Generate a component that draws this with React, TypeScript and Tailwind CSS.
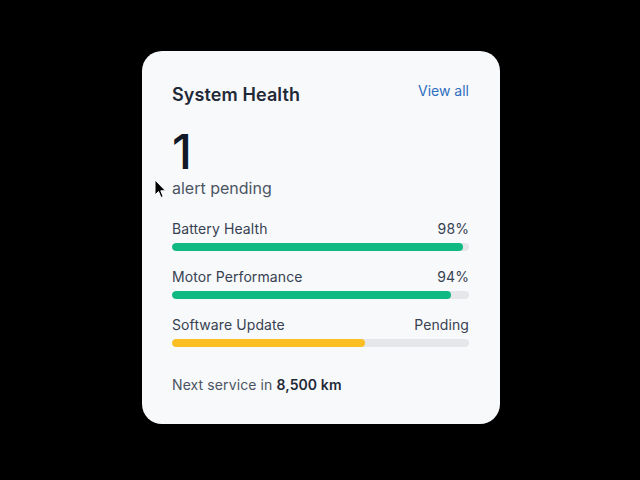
import React from "react";

const rows = [
  { label: "Battery Health", value: "98%", pct: 98, color: "bg-[#10b981]" },
  { label: "Motor Performance", value: "94%", pct: 94, color: "bg-[#10b981]" },
  { label: "Software Update", value: "Pending", pct: 65, color: "bg-[#fbbf24]" },
];

export default function App() {
  return (
    <div
      className="relative w-[640px] h-[480px] bg-black flex items-start justify-center pt-[51px] pl-[2px]"
      style={{ fontFamily: "Inter, 'Noto Sans', sans-serif" }}
    >
      <div className="w-[358px] h-[373px] rounded-[20px] bg-[#f8f9fb] pl-[30px] pr-[31px] pt-[30px] flex flex-col">
        <div className="flex items-start justify-between">
          <div className="text-[18px] leading-[28px] font-semibold tracking-[0.1px] text-[#1f2937]">System Health</div>
          <div className="text-[14px] leading-[20px] text-[#2f6fc0]">View all</div>
        </div>
        <div className="mt-[19px] text-[48px] leading-[48px] font-medium text-[#111827]">1</div>
        <div className="text-[16px] leading-[24px] text-[#4b5563]">alert pending</div>
        <div className="mt-[19px] flex flex-col gap-[16px]">
          {rows.map((r) => (
            <div key={r.label} className="flex flex-col gap-[4px]">
              <div className="flex justify-between text-[14px] leading-[20px] tracking-[0.1px] text-[#374151]">
                <span>{r.label}</span>
                <span>{r.value}</span>
              </div>
              <div className="h-[8px] rounded-full bg-[#e5e7eb] overflow-hidden">
                <div className={`h-full rounded-full ${r.color}`} style={{ width: `${r.pct}%` }} />
              </div>
            </div>
          ))}
        </div>
        <div className="mt-[28px] text-[14px] leading-[20px] tracking-[0.1px] text-[#4b5563]">
          Next service in <span className="font-semibold text-[#1f2937]">8,500 km</span>
        </div>
      </div>
      <svg className="absolute left-[154px] top-[179px]" width="14" height="20" viewBox="0 0 14 20">
        <path d="M1 1 L1 16 L4.5 12.5 L7 18.5 L9.2 17.6 L6.8 11.8 L11.5 11.8 Z" fill="#000" stroke="#fff" strokeWidth="1" />
      </svg>
    </div>
  );
}
